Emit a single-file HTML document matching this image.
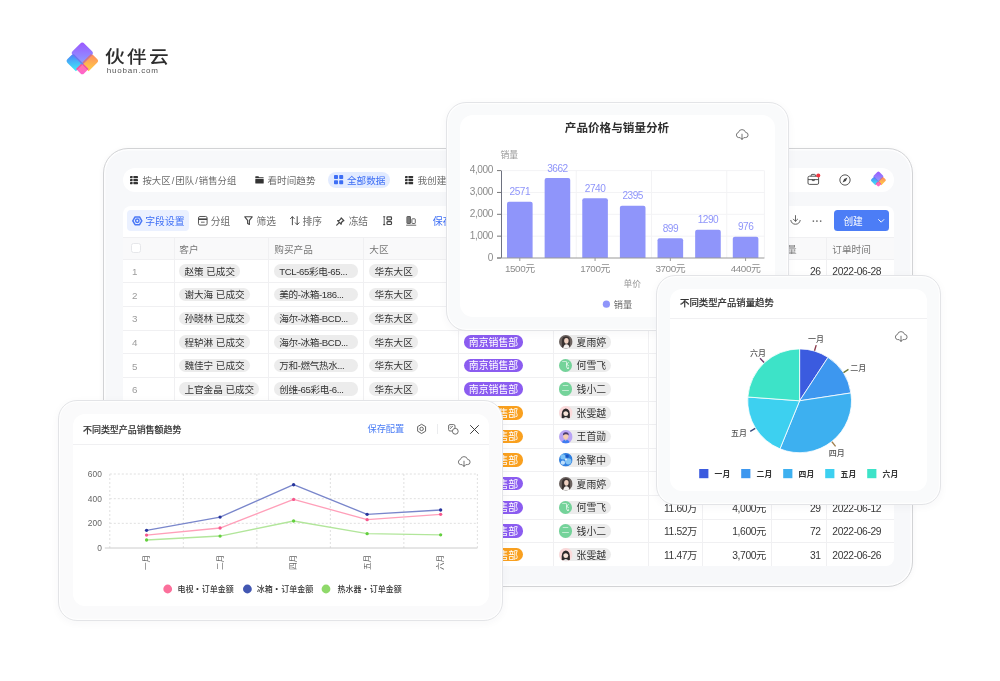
<!DOCTYPE html>
<html lang="zh-CN">
<head>
<meta charset="utf-8">
<title>伙伴云 - 数据分析</title>
<style>
*{box-sizing:border-box;margin:0;padding:0}
html,body{width:1000px;height:681px;background:#fff;overflow:hidden}
body{font-family:"Liberation Sans","Noto Sans CJK SC",sans-serif;position:relative}
#c{position:absolute;left:0;top:0;width:1000px;height:681px;overflow:hidden;will-change:transform}
.t{position:absolute;line-height:20px;white-space:nowrap}
.abs{position:absolute}
.panel{position:absolute;background:#f9fafb;border:1px solid #e3e4e7;box-shadow:0 2px 9px rgba(40,50,70,.04),inset 0 0 0 1.2px rgba(255,255,255,.8)}
.card{position:absolute;background:#fff}
svg{position:absolute;overflow:visible}
svg text{font-family:"Liberation Sans","Noto Sans CJK SC",sans-serif}
.chip{position:absolute;height:13.4px;border-radius:6.7px;background:#ececec}
.cp{z-index:0}
.cp b{position:absolute;z-index:-1;height:13.4px;border-radius:6.7px}
.t i{font-style:normal;padding:0 1.1px}
.hl{position:absolute;height:1px;background:#f0f0f2}
.vl{position:absolute;width:1px;background:#f0f0f2}
</style>
</head>
<body>
<div id="c">

<svg class="abs" style="left:0;top:0" width="1000" height="681" viewBox="0 0 1000 681">
<defs>
<linearGradient id="lgpa" gradientUnits="userSpaceOnUse" x1="-15.6" y1="-15.6" x2="0.7" y2="0.7"><stop offset="0" stop-color="#9c55ff"/><stop offset="1" stop-color="#8ca2ff"/></linearGradient>
<linearGradient id="lgba" gradientUnits="userSpaceOnUse" x1="-13.6" y1="0" x2="-2" y2="9.8"><stop offset="0" stop-color="#4b82f7"/><stop offset="1" stop-color="#3fe2f8"/></linearGradient>
<linearGradient id="lgoa" gradientUnits="userSpaceOnUse" x1="0" y1="-13.8" x2="9.8" y2="-2"><stop offset="0" stop-color="#ff8a60"/><stop offset="1" stop-color="#ffc946"/></linearGradient>
<linearGradient id="lgka" gradientUnits="userSpaceOnUse" x1="0" y1="0" x2="8" y2="8"><stop offset="0" stop-color="#ff79a2"/><stop offset="1" stop-color="#ff5fd2"/></linearGradient>
</defs>
<g transform="translate(82.3,63.7) scale(1) rotate(45)">
<path d="M-11 -0.9 H0.9 V9.9 H-11 Q-13.7 9.9 -13.7 7.2 V1.8 Q-13.7 -0.9 -11 -0.9 Z" fill="url(#lgba)"/>
<path d="M-0.9 -11.1 V0.9 H9.9 V-11.1 Q9.9 -13.8 7.2 -13.8 H1.8 Q-0.9 -13.8 -0.9 -11.1 Z" fill="url(#lgoa)"/>
<path d="M-0.7 -0.7 H8.1 V5.6 Q8.1 8.1 5.6 8.1 H-0.7 Z" fill="url(#lgka)"/>
<path d="M-0.7 0.7 H0.7 V8.1 H-0.7 Z M0.7 -0.7 H8.1 V0.7 H0.7 Z" fill="#e9479a" opacity=".75"/>
<path d="M-12.6 -15.7 H-2.2 Q0.8 -15.7 0.8 -12.7 V0.8 H-12.7 Q-15.7 0.8 -15.7 -2.2 V-12.6 Q-15.7 -15.7 -12.6 -15.7 Z" fill="url(#lgpa)"/>
<path d="M-13 -0.8 H0.8 V0.8 H-13 Z" fill="#4468e6" opacity=".55"/>
<path d="M-0.8 -13 H0.8 V-0.8 H-0.8 Z" fill="#f2664f" opacity=".7"/>
</g></svg>
<span class="t " style="left:105.2px;top:47.00px;font-size:17.6px;color:#2e2e2e;font-weight:500;letter-spacing:2.1px;transform:scaleX(1.12);transform-origin:0 50%;">伙伴云</span>
<span class="t " style="left:106.7px;top:61.00px;font-size:8px;color:#555;font-weight:400;letter-spacing:0.8px;">huoban.com</span>
<div class="panel" style="left:103px;top:148px;width:810px;height:439px;border-radius:25px;border-color:#d2d3d5;background:#f7f8fa;box-shadow:0 1px 6px rgba(40,50,70,.04),inset 0 0 0 1.5px rgba(255,255,255,.75)"></div>
<div class="card" style="left:122.5px;top:167.5px;width:771.5px;height:24px;border-radius:12px"></div>
<svg style="left:129.9px;top:175.5px" width="8.0" height="8.0" fill="#333"><rect x="0" y="0.00" width="2.60" height="2.20" rx="0.4"/><rect x="3.40" y="0.00" width="4.60" height="2.20" rx="0.4"/><rect x="0" y="3.00" width="2.60" height="2.20" rx="0.4"/><rect x="3.40" y="3.00" width="4.60" height="2.20" rx="0.4"/><rect x="0" y="6.00" width="2.60" height="2.20" rx="0.4"/><rect x="3.40" y="6.00" width="4.60" height="2.20" rx="0.4"/></svg>
<span class="t " style="left:142.5px;top:171.00px;font-size:9.35px;color:#6b6b6b;font-weight:400;">按大区<i>/</i>团队<i>/</i>销售分组</span>
<svg style="left:255px;top:175.8px" width="9" height="8" viewBox="0 0 9 8" fill="#333"><path d="M0.3 0.8 Q0.3 0.3 0.8 0.3 H3.4 L4.2 1.2 H8.2 Q8.7 1.2 8.7 1.7 V2.3 H0.3 Z"/><rect x="0.3" y="3" width="8.4" height="4.4" rx="0.5"/></svg>
<span class="t " style="left:267.5px;top:171.00px;font-size:9.65px;color:#6b6b6b;font-weight:400;">看时间趋势</span>
<div class="abs" style="left:328px;top:171.8px;width:62.4px;height:16.2px;border-radius:8.1px;background:#e2ebff"></div>
<svg style="left:334px;top:175.3px" width="9.2" height="9.2" viewBox="0 0 9.2 9.2" fill="#3d6ef5"><rect x="0" y="0" width="4" height="4" rx="0.8"/><rect x="5.2" y="0" width="4" height="4" rx="0.8"/><rect x="0" y="5.2" width="4" height="4" rx="0.8"/><rect x="5.2" y="5.2" width="4" height="4" rx="0.8"/></svg>
<span class="t " style="left:347px;top:171.00px;font-size:9.6px;color:#3d6ef5;font-weight:400;">全部数据</span>
<svg style="left:405.2px;top:175.7px" width="8.1" height="8.1" fill="#333"><rect x="0" y="0.00" width="2.63" height="2.23" rx="0.4"/><rect x="3.44" y="0.00" width="4.66" height="2.23" rx="0.4"/><rect x="0" y="3.04" width="2.63" height="2.23" rx="0.4"/><rect x="3.44" y="3.04" width="4.66" height="2.23" rx="0.4"/><rect x="0" y="6.07" width="2.63" height="2.23" rx="0.4"/><rect x="3.44" y="6.07" width="4.66" height="2.23" rx="0.4"/></svg>
<span class="t " style="left:417.5px;top:171.00px;font-size:9.6px;color:#6b6b6b;font-weight:400;">我创建的</span>
<svg style="left:806.6px;top:172.7px" width="14" height="13" viewBox="0 0 14 13" fill="none" stroke="#444" stroke-width="0.9" stroke-linejoin="round">
<rect x="1" y="3.2" width="10.6" height="8.2" rx="1.4"/><path d="M4.2 3.2 V2.2 Q4.2 1.4 5 1.4 H7.6 Q8.4 1.4 8.4 2.2 V3.2"/><path d="M1 6.6 H11.6"/><path d="M5.3 6.2 V7.6 H7.3 V6.2" />
<circle cx="11.3" cy="2.4" r="2" fill="#f5333f" stroke="none"/></svg>
<svg style="left:839px;top:173.6px" width="12" height="12" viewBox="0 0 12 12" fill="none" stroke="#444" stroke-width="0.9">
<circle cx="6" cy="6" r="5.15"/><path d="M8.4 3.6 L6.9 6.9 L3.6 8.4 L5.1 5.1 Z" fill="#444" stroke="none"/></svg>
<svg class="abs" style="left:0;top:0" width="1000" height="681" viewBox="0 0 1000 681">
<defs>
<linearGradient id="lgpb" gradientUnits="userSpaceOnUse" x1="-15.6" y1="-15.6" x2="0.7" y2="0.7"><stop offset="0" stop-color="#9c55ff"/><stop offset="1" stop-color="#8ca2ff"/></linearGradient>
<linearGradient id="lgbb" gradientUnits="userSpaceOnUse" x1="-13.6" y1="0" x2="-2" y2="9.8"><stop offset="0" stop-color="#4b82f7"/><stop offset="1" stop-color="#3fe2f8"/></linearGradient>
<linearGradient id="lgob" gradientUnits="userSpaceOnUse" x1="0" y1="-13.8" x2="9.8" y2="-2"><stop offset="0" stop-color="#ff8a60"/><stop offset="1" stop-color="#ffc946"/></linearGradient>
<linearGradient id="lgkb" gradientUnits="userSpaceOnUse" x1="0" y1="0" x2="8" y2="8"><stop offset="0" stop-color="#ff79a2"/><stop offset="1" stop-color="#ff5fd2"/></linearGradient>
</defs>
<g transform="translate(878.4,181.5) scale(0.475) rotate(45)">
<path d="M-11 -0.9 H0.9 V9.9 H-11 Q-13.7 9.9 -13.7 7.2 V1.8 Q-13.7 -0.9 -11 -0.9 Z" fill="url(#lgbb)"/>
<path d="M-0.9 -11.1 V0.9 H9.9 V-11.1 Q9.9 -13.8 7.2 -13.8 H1.8 Q-0.9 -13.8 -0.9 -11.1 Z" fill="url(#lgob)"/>
<path d="M-0.7 -0.7 H8.1 V5.6 Q8.1 8.1 5.6 8.1 H-0.7 Z" fill="url(#lgkb)"/>
<path d="M-0.7 0.7 H0.7 V8.1 H-0.7 Z M0.7 -0.7 H8.1 V0.7 H0.7 Z" fill="#e9479a" opacity=".75"/>
<path d="M-12.6 -15.7 H-2.2 Q0.8 -15.7 0.8 -12.7 V0.8 H-12.7 Q-15.7 0.8 -15.7 -2.2 V-12.6 Q-15.7 -15.7 -12.6 -15.7 Z" fill="url(#lgpb)"/>
<path d="M-13 -0.8 H0.8 V0.8 H-13 Z" fill="#4468e6" opacity=".55"/>
<path d="M-0.8 -13 H0.8 V-0.8 H-0.8 Z" fill="#f2664f" opacity=".7"/>
</g></svg>
<div class="card" style="left:122.5px;top:206.3px;width:771px;height:360px;border-radius:8px"></div>
<div class="abs" style="left:126.8px;top:210px;width:62.2px;height:21.4px;border-radius:4px;background:#ebf1ff"></div>
<svg style="left:0;top:0" width="1000" height="681" fill="none" stroke="#4a78f6" stroke-width="1.5" stroke-linejoin="round"><path d="M141.80 220.80 L139.55 224.70 L135.05 224.70 L132.80 220.80 L135.05 216.90 L139.55 216.90 Z"/><circle cx="137.3" cy="220.79999999999998" r="1.71"/></svg>
<span class="t " style="left:145.3px;top:212.00px;font-size:9.8px;color:#3d6ef5;font-weight:400;">字段设置</span>
<svg style="left:198px;top:215.89999999999998px" width="9.6" height="9.6" viewBox="0 0 9.6 9.6" fill="none" stroke="#444" stroke-width="0.9">
<rect x="0.5" y="0.5" width="8.6" height="8.6" rx="1.4"/><path d="M0.5 3.2 H9.1" stroke-width="1.6"/><path d="M3 6.2 H6.6" stroke-width="0.8"/></svg>
<span class="t " style="left:210.8px;top:212.00px;font-size:9.7px;color:#6b6b6b;font-weight:400;">分组</span>
<svg style="left:244.2px;top:216.29999999999998px" width="9" height="9.4" viewBox="0 0 9 9.4" fill="none" stroke="#4a4a4a" stroke-width="1.15" stroke-linejoin="round">
<path d="M0.8 0.8 H8.2 L5.4 4.3 V8.4 L3.6 7.4 V4.3 Z"/></svg>
<span class="t " style="left:256.6px;top:212.00px;font-size:9.7px;color:#6b6b6b;font-weight:400;">筛选</span>
<svg style="left:290.3px;top:216.1px" width="9.6" height="9.4" viewBox="0 0 9.6 9.4" fill="none" stroke="#444" stroke-width="0.95" stroke-linecap="round" stroke-linejoin="round">
<path d="M2.4 8.8 V0.8 M0.5 2.6 L2.4 0.7 L4.3 2.6"/><path d="M7.2 0.6 V8.6 M5.3 6.8 L7.2 8.7 L9.1 6.8"/></svg>
<span class="t " style="left:302.6px;top:212.00px;font-size:9.7px;color:#6b6b6b;font-weight:400;">排序</span>
<svg style="left:336.2px;top:216.89999999999998px" width="8.8" height="8.8" viewBox="0 0 8.8 8.8" fill="none" stroke="#444" stroke-width="1.25" stroke-linejoin="round" stroke-linecap="round">
<path d="M5.2 0.9 L7.9 3.6 L6.9 4 L5.4 5.5 L5.2 7.2 L1.6 3.6 L3.3 3.4 L4.8 1.9 Z"/><path d="M3.2 5.6 L0.7 8.1"/></svg>
<span class="t " style="left:348.7px;top:212.00px;font-size:9.7px;color:#6b6b6b;font-weight:400;">冻结</span>
<svg style="left:382.6px;top:216.2px" width="9.2" height="9.4" viewBox="0 0 9.2 9.4" fill="none" stroke="#444">
<path d="M1.2 0.9 V8.5" stroke-width="0.9"/><path d="M0.2 0.8 H2.2 M0.2 8.6 H2.2" stroke-width="1.1"/><rect x="4" y="0.9" width="4.5" height="2.9" rx="0.8" stroke-width="1.2"/><rect x="4" y="5.6" width="4.5" height="2.9" rx="0.8" stroke-width="1.2"/></svg>
<svg style="left:406px;top:216.2px" width="10.4" height="9.8" viewBox="0 0 10.4 9.8" fill="none" stroke="#555" stroke-width="0.9">
<rect x="0.9" y="0.5" width="3.6" height="7" rx="0.4" fill="#999"/><path d="M2.1 0.8 V7.3 M3.3 0.8 V7.3" stroke-width="0.6"/><rect x="5.9" y="2.8" width="3.4" height="4.7" rx="0.6"/><path d="M0.2 9.2 H10.2"/></svg>
<span class="t " style="left:432.8px;top:212.00px;font-size:10px;color:#3d6ef5;font-weight:400;">保存</span>
<svg style="left:789.5px;top:215.39999999999998px" width="11" height="10.6" viewBox="0 0 11 10.6" fill="none" stroke="#555" stroke-width="0.9" stroke-linecap="round" stroke-linejoin="round">
<path d="M5.5 0.6 V6.2 M3.4 4.2 L5.5 6.3 L7.6 4.2"/><path d="M0.8 5.4 A4.8 4.8 0 0 0 10.2 5.4"/></svg>
<span class="t " style="left:667.4px;width:300px;text-align:center;top:212.00px;font-size:10px;color:#777;font-weight:700;letter-spacing:0.3px;">···</span>
<div class="abs" style="left:834px;top:210px;width:55px;height:21.4px;border-radius:3.5px;background:#4c7df6"></div>
<span class="t " style="left:843.4px;top:212.00px;font-size:9.7px;color:#fff;font-weight:400;">创建</span>
<svg style="left:877.5px;top:218.7px" width="6.4" height="4" viewBox="0 0 6.4 4" fill="none" stroke="#fff" stroke-width="0.95" stroke-linecap="round" stroke-linejoin="round"><path d="M0.6 0.6 L3.2 3.2 L5.8 0.6"/></svg>
<div class="abs" style="left:122.5px;top:237.0px;width:771px;height:22.5px;background:#f9f9fa"></div>
<div class="hl" style="left:122.5px;top:236.5px;width:771px"></div>
<div class="hl" style="left:122.5px;top:258.60px;width:771px"></div>
<div class="hl" style="left:122.5px;top:282.25px;width:771px"></div>
<div class="hl" style="left:122.5px;top:305.90px;width:771px"></div>
<div class="hl" style="left:122.5px;top:329.55px;width:771px"></div>
<div class="hl" style="left:122.5px;top:353.20px;width:771px"></div>
<div class="hl" style="left:122.5px;top:376.85px;width:771px"></div>
<div class="hl" style="left:122.5px;top:400.50px;width:771px"></div>
<div class="hl" style="left:122.5px;top:424.15px;width:771px"></div>
<div class="hl" style="left:122.5px;top:447.80px;width:771px"></div>
<div class="hl" style="left:122.5px;top:471.45px;width:771px"></div>
<div class="hl" style="left:122.5px;top:495.10px;width:771px"></div>
<div class="hl" style="left:122.5px;top:518.75px;width:771px"></div>
<div class="hl" style="left:122.5px;top:542.40px;width:771px"></div>
<div class="vl" style="left:174.0px;top:237.0px;height:329.29999999999995px"></div>
<div class="vl" style="left:268.0px;top:237.0px;height:329.29999999999995px"></div>
<div class="vl" style="left:363.0px;top:237.0px;height:329.29999999999995px"></div>
<div class="vl" style="left:458.2px;top:237.0px;height:329.29999999999995px"></div>
<div class="vl" style="left:552.8px;top:237.0px;height:329.29999999999995px"></div>
<div class="vl" style="left:648.1px;top:237.0px;height:329.29999999999995px"></div>
<div class="vl" style="left:702.0px;top:237.0px;height:329.29999999999995px"></div>
<div class="vl" style="left:771.0px;top:237.0px;height:329.29999999999995px"></div>
<div class="vl" style="left:825.5px;top:237.0px;height:329.29999999999995px"></div>
<div class="abs" style="left:130.5px;top:242.8px;width:10.4px;height:10.4px;border-radius:2.5px;background:#fff;border:1px solid #e6e7ea"></div>
<span class="t " style="left:179.3px;top:240.00px;font-size:9.65px;color:#777;font-weight:400;">客户</span>
<span class="t " style="left:274.3px;top:240.00px;font-size:9.65px;color:#777;font-weight:400;">购买产品</span>
<span class="t " style="left:369.3px;top:240.00px;font-size:9.65px;color:#777;font-weight:400;">大区</span>
<span class="t " style="left:464.5px;top:240.00px;font-size:9.65px;color:#777;font-weight:400;">销售团队</span>
<span class="t " style="left:559px;top:240.00px;font-size:9.65px;color:#777;font-weight:400;">销售人员</span>
<span class="t " style="left:654.5px;top:240.00px;font-size:9.65px;color:#777;font-weight:400;">订单金额</span>
<span class="t " style="left:708.5px;top:240.00px;font-size:9.65px;color:#777;font-weight:400;">单价</span>
<span class="t " style="left:777.3px;top:240.00px;font-size:9.65px;color:#777;font-weight:400;">销量</span>
<span class="t " style="left:832.3px;top:240.00px;font-size:9.65px;color:#777;font-weight:400;">订单时间</span>
<span class="t " style="left:-15.599999999999994px;width:300px;text-align:center;top:262.00px;font-size:9.8px;color:#9c9c9c;font-weight:400;letter-spacing:-0.4px;">1</span>
<span class="t cp" style="left:184.4px;top:262px;font-size:9.6px;color:#333;"><b style="left:-5px;right:-5px;top:2.23px;background:#ececec"></b>赵策 已成交</span>
<span class="t cp" style="left:279.2px;top:262px;font-size:9.6px;color:#333;letter-spacing:-0.36px;"><b style="left:-5px;width:83.4px;top:2.23px;background:#ececec"></b>TCL-65彩电-65...</span>
<span class="t cp" style="left:374.4px;top:262px;font-size:9.6px;color:#333;"><b style="left:-5px;right:-5px;top:2.23px;background:#ececec"></b>华东大区</span>
<span class="t cp" style="left:468.8px;top:262px;font-size:9.9px;color:#fff;"><b style="left:-5px;right:-5px;top:2.23px;background:#8b5cf0"></b>南京销售部</span>
<div class="chip" style="left:558.8px;top:264.23px;width:52.4px"></div>
<svg style="left:558.80px;top:264.18px" width="13.6" height="13.6" viewBox="0 0 14 14"><defs><clipPath id="av565_270"><circle cx="7" cy="7" r="7"/></clipPath></defs><g clip-path="url(#av565_270)"><rect width="14" height="14" fill="#6b625f"/><path d="M3 14 V6 Q3 1.5 7.4 1.5 Q11.5 1.5 11.2 7 V14 Z" fill="#3a3230"/><ellipse cx="7.6" cy="6" rx="2.3" ry="2.9" fill="#f0d2c2"/><path d="M4.2 14 Q5 9.6 7.6 9.6 Q10.4 9.6 11 14 Z" fill="#f4f1ef"/></g></svg>
<span class="t " style="left:576.6px;top:262.00px;font-size:9.8px;color:#333;font-weight:400;">夏雨婷</span>
<span class="t " style="right:303px;top:262.00px;font-size:10.3px;color:#383838;font-weight:400;letter-spacing:-0.38px;">12.95万</span>
<span class="t " style="right:234px;top:262.00px;font-size:10.3px;color:#383838;font-weight:400;letter-spacing:-0.38px;">1,500元</span>
<span class="t " style="right:179.39999999999998px;top:262.00px;font-size:10.3px;color:#383838;font-weight:400;letter-spacing:-0.38px;">26</span>
<span class="t " style="left:832.3px;top:262.00px;font-size:10.3px;color:#383838;font-weight:400;letter-spacing:-0.38px;">2022-06-28</span>
<span class="t " style="left:-15.599999999999994px;width:300px;text-align:center;top:286.00px;font-size:9.8px;color:#9c9c9c;font-weight:400;letter-spacing:-0.4px;">2</span>
<span class="t cp" style="left:184.4px;top:285px;font-size:9.6px;color:#333;"><b style="left:-5px;right:-5px;top:2.88px;background:#ececec"></b>谢大海 已成交</span>
<span class="t cp" style="left:279.2px;top:285px;font-size:9.6px;color:#333;letter-spacing:-0.36px;"><b style="left:-5px;width:83.4px;top:2.88px;background:#ececec"></b>美的-冰箱-186...</span>
<span class="t cp" style="left:374.4px;top:285px;font-size:9.6px;color:#333;"><b style="left:-5px;right:-5px;top:2.88px;background:#ececec"></b>华东大区</span>
<span class="t cp" style="left:468.8px;top:285px;font-size:9.9px;color:#fff;"><b style="left:-5px;right:-5px;top:2.88px;background:#8b5cf0"></b>南京销售部</span>
<div class="chip" style="left:558.8px;top:287.88px;width:52.4px"></div>
<div class="abs" style="left:558.80px;top:287.82px;width:13.6px;height:13.6px;border-radius:50%;background:#74d39a;color:#fff;font-size:7.5px;line-height:13.6px;text-align:center">飞</div>
<span class="t " style="left:576.6px;top:285.00px;font-size:9.8px;color:#333;font-weight:400;">何雪飞</span>
<span class="t " style="right:303px;top:286.00px;font-size:10.3px;color:#383838;font-weight:400;letter-spacing:-0.38px;">12.80万</span>
<span class="t " style="right:234px;top:286.00px;font-size:10.3px;color:#383838;font-weight:400;letter-spacing:-0.38px;">1,600元</span>
<span class="t " style="right:179.39999999999998px;top:286.00px;font-size:10.3px;color:#383838;font-weight:400;letter-spacing:-0.38px;">81</span>
<span class="t " style="left:832.3px;top:286.00px;font-size:10.3px;color:#383838;font-weight:400;letter-spacing:-0.38px;">2022-06-03</span>
<span class="t " style="left:-15.599999999999994px;width:300px;text-align:center;top:309.00px;font-size:9.8px;color:#9c9c9c;font-weight:400;letter-spacing:-0.4px;">3</span>
<span class="t cp" style="left:184.4px;top:309px;font-size:9.6px;color:#333;"><b style="left:-5px;right:-5px;top:2.53px;background:#ececec"></b>孙晓林 已成交</span>
<span class="t cp" style="left:279.2px;top:309px;font-size:9.6px;color:#333;letter-spacing:-0.36px;"><b style="left:-5px;width:83.4px;top:2.53px;background:#ececec"></b>海尔-冰箱-BCD...</span>
<span class="t cp" style="left:374.4px;top:309px;font-size:9.6px;color:#333;"><b style="left:-5px;right:-5px;top:2.53px;background:#ececec"></b>华东大区</span>
<span class="t cp" style="left:468.8px;top:309px;font-size:9.9px;color:#fff;"><b style="left:-5px;right:-5px;top:2.53px;background:#8b5cf0"></b>南京销售部</span>
<div class="chip" style="left:558.8px;top:311.53px;width:52.4px"></div>
<div class="abs" style="left:558.80px;top:311.48px;width:13.6px;height:13.6px;border-radius:50%;background:#74d39a;color:#fff;font-size:7.5px;line-height:13.6px;text-align:center">二</div>
<span class="t " style="left:576.6px;top:309.00px;font-size:9.8px;color:#333;font-weight:400;">钱小二</span>
<span class="t " style="right:303px;top:310.00px;font-size:10.3px;color:#383838;font-weight:400;letter-spacing:-0.38px;">12.61万</span>
<span class="t " style="right:234px;top:310.00px;font-size:10.3px;color:#383838;font-weight:400;letter-spacing:-0.38px;">1,700元</span>
<span class="t " style="right:179.39999999999998px;top:310.00px;font-size:10.3px;color:#383838;font-weight:400;letter-spacing:-0.38px;">74</span>
<span class="t " style="left:832.3px;top:310.00px;font-size:10.3px;color:#383838;font-weight:400;letter-spacing:-0.38px;">2022-06-17</span>
<span class="t " style="left:-15.599999999999994px;width:300px;text-align:center;top:333.00px;font-size:9.8px;color:#9c9c9c;font-weight:400;letter-spacing:-0.4px;">4</span>
<span class="t cp" style="left:184.4px;top:333px;font-size:9.6px;color:#333;"><b style="left:-5px;right:-5px;top:2.18px;background:#ececec"></b>程轳淋 已成交</span>
<span class="t cp" style="left:279.2px;top:333px;font-size:9.6px;color:#333;letter-spacing:-0.36px;"><b style="left:-5px;width:83.4px;top:2.18px;background:#ececec"></b>海尔-冰箱-BCD...</span>
<span class="t cp" style="left:374.4px;top:333px;font-size:9.6px;color:#333;"><b style="left:-5px;right:-5px;top:2.18px;background:#ececec"></b>华东大区</span>
<span class="t cp" style="left:468.8px;top:333px;font-size:9.9px;color:#fff;"><b style="left:-5px;right:-5px;top:2.18px;background:#8b5cf0"></b>南京销售部</span>
<div class="chip" style="left:558.8px;top:335.18px;width:52.4px"></div>
<svg style="left:558.80px;top:335.12px" width="13.6" height="13.6" viewBox="0 0 14 14"><defs><clipPath id="av565_341"><circle cx="7" cy="7" r="7"/></clipPath></defs><g clip-path="url(#av565_341)"><rect width="14" height="14" fill="#6b625f"/><path d="M3 14 V6 Q3 1.5 7.4 1.5 Q11.5 1.5 11.2 7 V14 Z" fill="#3a3230"/><ellipse cx="7.6" cy="6" rx="2.3" ry="2.9" fill="#f0d2c2"/><path d="M4.2 14 Q5 9.6 7.6 9.6 Q10.4 9.6 11 14 Z" fill="#f4f1ef"/></g></svg>
<span class="t " style="left:576.6px;top:333.00px;font-size:9.8px;color:#333;font-weight:400;">夏雨婷</span>
<span class="t " style="right:303px;top:333.00px;font-size:10.3px;color:#383838;font-weight:400;letter-spacing:-0.38px;">12.44万</span>
<span class="t " style="right:234px;top:333.00px;font-size:10.3px;color:#383838;font-weight:400;letter-spacing:-0.38px;">2,800元</span>
<span class="t " style="right:179.39999999999998px;top:333.00px;font-size:10.3px;color:#383838;font-weight:400;letter-spacing:-0.38px;">44</span>
<span class="t " style="left:832.3px;top:333.00px;font-size:10.3px;color:#383838;font-weight:400;letter-spacing:-0.38px;">2022-06-21</span>
<span class="t " style="left:-15.599999999999994px;width:300px;text-align:center;top:357.00px;font-size:9.8px;color:#9c9c9c;font-weight:400;letter-spacing:-0.4px;">5</span>
<span class="t cp" style="left:184.4px;top:356px;font-size:9.6px;color:#333;"><b style="left:-5px;right:-5px;top:2.83px;background:#ececec"></b>魏佳宁 已成交</span>
<span class="t cp" style="left:279.2px;top:356px;font-size:9.6px;color:#333;letter-spacing:-0.36px;"><b style="left:-5px;width:83.4px;top:2.83px;background:#ececec"></b>万和-燃气热水...</span>
<span class="t cp" style="left:374.4px;top:356px;font-size:9.6px;color:#333;"><b style="left:-5px;right:-5px;top:2.83px;background:#ececec"></b>华东大区</span>
<span class="t cp" style="left:468.8px;top:356px;font-size:9.9px;color:#fff;"><b style="left:-5px;right:-5px;top:2.83px;background:#8b5cf0"></b>南京销售部</span>
<div class="chip" style="left:558.8px;top:358.83px;width:52.4px"></div>
<div class="abs" style="left:558.80px;top:358.78px;width:13.6px;height:13.6px;border-radius:50%;background:#74d39a;color:#fff;font-size:7.5px;line-height:13.6px;text-align:center">飞</div>
<span class="t " style="left:576.6px;top:356.00px;font-size:9.8px;color:#333;font-weight:400;">何雪飞</span>
<span class="t " style="right:303px;top:357.00px;font-size:10.3px;color:#383838;font-weight:400;letter-spacing:-0.38px;">12.30万</span>
<span class="t " style="right:234px;top:357.00px;font-size:10.3px;color:#383838;font-weight:400;letter-spacing:-0.38px;">3,700元</span>
<span class="t " style="right:179.39999999999998px;top:357.00px;font-size:10.3px;color:#383838;font-weight:400;letter-spacing:-0.38px;">33</span>
<span class="t " style="left:832.3px;top:357.00px;font-size:10.3px;color:#383838;font-weight:400;letter-spacing:-0.38px;">2022-06-08</span>
<span class="t " style="left:-15.599999999999994px;width:300px;text-align:center;top:380.00px;font-size:9.8px;color:#9c9c9c;font-weight:400;letter-spacing:-0.4px;">6</span>
<span class="t cp" style="left:184.4px;top:380px;font-size:9.6px;color:#333;"><b style="left:-5px;right:-5px;top:2.48px;background:#ececec"></b>上官金晶 已成交</span>
<span class="t cp" style="left:279.2px;top:380px;font-size:9.6px;color:#333;letter-spacing:-0.36px;"><b style="left:-5px;width:83.4px;top:2.48px;background:#ececec"></b>创维-65彩电-6...</span>
<span class="t cp" style="left:374.4px;top:380px;font-size:9.6px;color:#333;"><b style="left:-5px;right:-5px;top:2.48px;background:#ececec"></b>华东大区</span>
<span class="t cp" style="left:468.8px;top:380px;font-size:9.9px;color:#fff;"><b style="left:-5px;right:-5px;top:2.48px;background:#8b5cf0"></b>南京销售部</span>
<div class="chip" style="left:558.8px;top:382.48px;width:52.4px"></div>
<div class="abs" style="left:558.80px;top:382.43px;width:13.6px;height:13.6px;border-radius:50%;background:#74d39a;color:#fff;font-size:7.5px;line-height:13.6px;text-align:center">二</div>
<span class="t " style="left:576.6px;top:380.00px;font-size:9.8px;color:#333;font-weight:400;">钱小二</span>
<span class="t " style="right:303px;top:381.00px;font-size:10.3px;color:#383838;font-weight:400;letter-spacing:-0.38px;">12.18万</span>
<span class="t " style="right:234px;top:381.00px;font-size:10.3px;color:#383838;font-weight:400;letter-spacing:-0.38px;">4,000元</span>
<span class="t " style="right:179.39999999999998px;top:381.00px;font-size:10.3px;color:#383838;font-weight:400;letter-spacing:-0.38px;">30</span>
<span class="t " style="left:832.3px;top:381.00px;font-size:10.3px;color:#383838;font-weight:400;letter-spacing:-0.38px;">2022-06-14</span>
<span class="t " style="left:-15.599999999999994px;width:300px;text-align:center;top:404.00px;font-size:9.8px;color:#9c9c9c;font-weight:400;letter-spacing:-0.4px;">7</span>
<span class="t cp" style="left:184.4px;top:404px;font-size:9.6px;color:#333;"><b style="left:-5px;right:-5px;top:2.12px;background:#ececec"></b>周文博 已成交</span>
<span class="t cp" style="left:279.2px;top:404px;font-size:9.6px;color:#333;letter-spacing:-0.36px;"><b style="left:-5px;width:83.4px;top:2.12px;background:#ececec"></b>美的-热水器-F...</span>
<span class="t cp" style="left:374.4px;top:404px;font-size:9.6px;color:#333;"><b style="left:-5px;right:-5px;top:2.12px;background:#ececec"></b>华东大区</span>
<span class="t cp" style="left:468.8px;top:404px;font-size:9.9px;color:#fff;"><b style="left:-5px;right:-5px;top:2.12px;background:#f9a01f"></b>苏州销售部</span>
<div class="chip" style="left:558.8px;top:406.12px;width:52.4px"></div>
<svg style="left:558.80px;top:406.07px" width="13.6" height="13.6" viewBox="0 0 14 14"><defs><clipPath id="av565_412"><circle cx="7" cy="7" r="7"/></clipPath></defs><g clip-path="url(#av565_412)"><rect width="14" height="14" fill="#fbd9da"/><path d="M2.8 12.5 Q2 3 7 2.6 Q12 3 11.2 12.5 Z" fill="#2d2a2b"/><ellipse cx="7" cy="7.6" rx="2.5" ry="2.6" fill="#f7e3d8"/><path d="M4.4 6.6 Q7 4.4 9.6 6.6 L9.6 5 Q7 3.4 4.4 5 Z" fill="#2d2a2b"/><path d="M4 14 Q4.6 11.2 7 11.2 Q9.4 11.2 10 14 Z" fill="#e9e6e6"/></g></svg>
<span class="t " style="left:576.6px;top:404.00px;font-size:9.8px;color:#333;font-weight:400;">张雯越</span>
<span class="t " style="right:303px;top:404.00px;font-size:10.3px;color:#383838;font-weight:400;letter-spacing:-0.38px;">12.05万</span>
<span class="t " style="right:234px;top:404.00px;font-size:10.3px;color:#383838;font-weight:400;letter-spacing:-0.38px;">4,400元</span>
<span class="t " style="right:179.39999999999998px;top:404.00px;font-size:10.3px;color:#383838;font-weight:400;letter-spacing:-0.38px;">27</span>
<span class="t " style="left:832.3px;top:404.00px;font-size:10.3px;color:#383838;font-weight:400;letter-spacing:-0.38px;">2022-06-25</span>
<span class="t " style="left:-15.599999999999994px;width:300px;text-align:center;top:428.00px;font-size:9.8px;color:#9c9c9c;font-weight:400;letter-spacing:-0.4px;">8</span>
<span class="t cp" style="left:184.4px;top:427px;font-size:9.6px;color:#333;"><b style="left:-5px;right:-5px;top:2.77px;background:#ececec"></b>李思远 已成交</span>
<span class="t cp" style="left:279.2px;top:427px;font-size:9.6px;color:#333;letter-spacing:-0.36px;"><b style="left:-5px;width:83.4px;top:2.77px;background:#ececec"></b>海尔-冰箱-BCD...</span>
<span class="t cp" style="left:374.4px;top:427px;font-size:9.6px;color:#333;"><b style="left:-5px;right:-5px;top:2.77px;background:#ececec"></b>华东大区</span>
<span class="t cp" style="left:468.8px;top:427px;font-size:9.9px;color:#fff;"><b style="left:-5px;right:-5px;top:2.77px;background:#f9a01f"></b>苏州销售部</span>
<div class="chip" style="left:558.8px;top:429.77px;width:52.4px"></div>
<svg style="left:558.80px;top:429.72px" width="13.6" height="13.6" viewBox="0 0 14 14"><defs><clipPath id="av565_436"><circle cx="7" cy="7" r="7"/></clipPath></defs><g clip-path="url(#av565_436)"><rect width="14" height="14" fill="#b9a4f5"/><ellipse cx="7" cy="6.4" rx="2.7" ry="3" fill="#f6cdb0"/><path d="M4 5.6 Q4 2.2 7.2 2.4 Q10.2 2.4 10 5.6 Q8.5 4 6.6 4.4 Q5 4.6 4 5.6 Z" fill="#4a3a6a"/><path d="M2.6 14 Q3.2 10 7 10 Q10.8 10 11.4 14 Z" fill="#3f7df2"/><path d="M5.8 9.6 L7 11.4 L8.2 9.6 Z" fill="#f6cdb0"/></g></svg>
<span class="t " style="left:576.6px;top:427.00px;font-size:9.8px;color:#333;font-weight:400;">王首勋</span>
<span class="t " style="right:303px;top:428.00px;font-size:10.3px;color:#383838;font-weight:400;letter-spacing:-0.38px;">11.93万</span>
<span class="t " style="right:234px;top:428.00px;font-size:10.3px;color:#383838;font-weight:400;letter-spacing:-0.38px;">1,500元</span>
<span class="t " style="right:179.39999999999998px;top:428.00px;font-size:10.3px;color:#383838;font-weight:400;letter-spacing:-0.38px;">79</span>
<span class="t " style="left:832.3px;top:428.00px;font-size:10.3px;color:#383838;font-weight:400;letter-spacing:-0.38px;">2022-06-05</span>
<span class="t " style="left:-15.599999999999994px;width:300px;text-align:center;top:451.00px;font-size:9.8px;color:#9c9c9c;font-weight:400;letter-spacing:-0.4px;">9</span>
<span class="t cp" style="left:184.4px;top:451px;font-size:9.6px;color:#333;"><b style="left:-5px;right:-5px;top:2.43px;background:#ececec"></b>陈嘉怡 已成交</span>
<span class="t cp" style="left:279.2px;top:451px;font-size:9.6px;color:#333;letter-spacing:-0.36px;"><b style="left:-5px;width:83.4px;top:2.43px;background:#ececec"></b>TCL-65彩电-65...</span>
<span class="t cp" style="left:374.4px;top:451px;font-size:9.6px;color:#333;"><b style="left:-5px;right:-5px;top:2.43px;background:#ececec"></b>华东大区</span>
<span class="t cp" style="left:468.8px;top:451px;font-size:9.9px;color:#fff;"><b style="left:-5px;right:-5px;top:2.43px;background:#f9a01f"></b>苏州销售部</span>
<div class="chip" style="left:558.8px;top:453.43px;width:52.4px"></div>
<svg style="left:558.80px;top:453.38px" width="13.6" height="13.6" viewBox="0 0 14 14"><defs><clipPath id="av565_460"><circle cx="7" cy="7" r="7"/></clipPath></defs><g clip-path="url(#av565_460)"><rect width="14" height="14" fill="#2f7fe0"/><circle cx="4" cy="4" r="2.6" fill="#7fc4f7"/><circle cx="9.6" cy="8.6" r="3.2" fill="#9ad7fa" opacity=".8"/><circle cx="8.5" cy="3.2" r="1.6" fill="#1d55c0"/><circle cx="4" cy="10" r="2.2" fill="#d6efff" opacity=".85"/><circle cx="7" cy="6.6" r="1.2" fill="#fff" opacity=".8"/></g></svg>
<span class="t " style="left:576.6px;top:451.00px;font-size:9.8px;color:#333;font-weight:400;">徐擎中</span>
<span class="t " style="right:303px;top:452.00px;font-size:10.3px;color:#383838;font-weight:400;letter-spacing:-0.38px;">11.86万</span>
<span class="t " style="right:234px;top:452.00px;font-size:10.3px;color:#383838;font-weight:400;letter-spacing:-0.38px;">1,700元</span>
<span class="t " style="right:179.39999999999998px;top:452.00px;font-size:10.3px;color:#383838;font-weight:400;letter-spacing:-0.38px;">70</span>
<span class="t " style="left:832.3px;top:452.00px;font-size:10.3px;color:#383838;font-weight:400;letter-spacing:-0.38px;">2022-06-19</span>
<span class="t " style="left:-15.599999999999994px;width:300px;text-align:center;top:475.00px;font-size:9.8px;color:#9c9c9c;font-weight:400;letter-spacing:-0.4px;">10</span>
<span class="t cp" style="left:184.4px;top:475px;font-size:9.6px;color:#333;"><b style="left:-5px;right:-5px;top:2.08px;background:#ececec"></b>吴昊天 已成交</span>
<span class="t cp" style="left:279.2px;top:475px;font-size:9.6px;color:#333;letter-spacing:-0.36px;"><b style="left:-5px;width:83.4px;top:2.08px;background:#ececec"></b>万和-燃气热水...</span>
<span class="t cp" style="left:374.4px;top:475px;font-size:9.6px;color:#333;"><b style="left:-5px;right:-5px;top:2.08px;background:#ececec"></b>华东大区</span>
<span class="t cp" style="left:468.8px;top:475px;font-size:9.9px;color:#fff;"><b style="left:-5px;right:-5px;top:2.08px;background:#8b5cf0"></b>南京销售部</span>
<div class="chip" style="left:558.8px;top:477.08px;width:52.4px"></div>
<svg style="left:558.80px;top:477.03px" width="13.6" height="13.6" viewBox="0 0 14 14"><defs><clipPath id="av565_483"><circle cx="7" cy="7" r="7"/></clipPath></defs><g clip-path="url(#av565_483)"><rect width="14" height="14" fill="#6b625f"/><path d="M3 14 V6 Q3 1.5 7.4 1.5 Q11.5 1.5 11.2 7 V14 Z" fill="#3a3230"/><ellipse cx="7.6" cy="6" rx="2.3" ry="2.9" fill="#f0d2c2"/><path d="M4.2 14 Q5 9.6 7.6 9.6 Q10.4 9.6 11 14 Z" fill="#f4f1ef"/></g></svg>
<span class="t " style="left:576.6px;top:475.00px;font-size:9.8px;color:#333;font-weight:400;">夏雨婷</span>
<span class="t " style="right:303px;top:475.00px;font-size:10.3px;color:#383838;font-weight:400;letter-spacing:-0.38px;">11.72万</span>
<span class="t " style="right:234px;top:475.00px;font-size:10.3px;color:#383838;font-weight:400;letter-spacing:-0.38px;">2,800元</span>
<span class="t " style="right:179.39999999999998px;top:475.00px;font-size:10.3px;color:#383838;font-weight:400;letter-spacing:-0.38px;">42</span>
<span class="t " style="left:832.3px;top:475.00px;font-size:10.3px;color:#383838;font-weight:400;letter-spacing:-0.38px;">2022-06-30</span>
<span class="t " style="left:-15.599999999999994px;width:300px;text-align:center;top:499.00px;font-size:9.8px;color:#9c9c9c;font-weight:400;letter-spacing:-0.4px;">11</span>
<span class="t cp" style="left:184.4px;top:498px;font-size:9.6px;color:#333;"><b style="left:-5px;right:-5px;top:2.73px;background:#ececec"></b>郑晓彤 已成交</span>
<span class="t cp" style="left:279.2px;top:498px;font-size:9.6px;color:#333;letter-spacing:-0.36px;"><b style="left:-5px;width:83.4px;top:2.73px;background:#ececec"></b>创维-65彩电-6...</span>
<span class="t cp" style="left:374.4px;top:498px;font-size:9.6px;color:#333;"><b style="left:-5px;right:-5px;top:2.73px;background:#ececec"></b>华东大区</span>
<span class="t cp" style="left:468.8px;top:498px;font-size:9.9px;color:#fff;"><b style="left:-5px;right:-5px;top:2.73px;background:#8b5cf0"></b>南京销售部</span>
<div class="chip" style="left:558.8px;top:500.73px;width:52.4px"></div>
<div class="abs" style="left:558.80px;top:500.68px;width:13.6px;height:13.6px;border-radius:50%;background:#74d39a;color:#fff;font-size:7.5px;line-height:13.6px;text-align:center">飞</div>
<span class="t " style="left:576.6px;top:498.00px;font-size:9.8px;color:#333;font-weight:400;">何雪飞</span>
<span class="t " style="right:303px;top:499.00px;font-size:10.3px;color:#383838;font-weight:400;letter-spacing:-0.38px;">11.60万</span>
<span class="t " style="right:234px;top:499.00px;font-size:10.3px;color:#383838;font-weight:400;letter-spacing:-0.38px;">4,000元</span>
<span class="t " style="right:179.39999999999998px;top:499.00px;font-size:10.3px;color:#383838;font-weight:400;letter-spacing:-0.38px;">29</span>
<span class="t " style="left:832.3px;top:499.00px;font-size:10.3px;color:#383838;font-weight:400;letter-spacing:-0.38px;">2022-06-12</span>
<span class="t " style="left:-15.599999999999994px;width:300px;text-align:center;top:522.00px;font-size:9.8px;color:#9c9c9c;font-weight:400;letter-spacing:-0.4px;">12</span>
<span class="t cp" style="left:184.4px;top:522px;font-size:9.6px;color:#333;"><b style="left:-5px;right:-5px;top:2.38px;background:#ececec"></b>冯立新 已成交</span>
<span class="t cp" style="left:279.2px;top:522px;font-size:9.6px;color:#333;letter-spacing:-0.36px;"><b style="left:-5px;width:83.4px;top:2.38px;background:#ececec"></b>美的-冰箱-186...</span>
<span class="t cp" style="left:374.4px;top:522px;font-size:9.6px;color:#333;"><b style="left:-5px;right:-5px;top:2.38px;background:#ececec"></b>华东大区</span>
<span class="t cp" style="left:468.8px;top:522px;font-size:9.9px;color:#fff;"><b style="left:-5px;right:-5px;top:2.38px;background:#8b5cf0"></b>南京销售部</span>
<div class="chip" style="left:558.8px;top:524.38px;width:52.4px"></div>
<div class="abs" style="left:558.80px;top:524.33px;width:13.6px;height:13.6px;border-radius:50%;background:#74d39a;color:#fff;font-size:7.5px;line-height:13.6px;text-align:center">二</div>
<span class="t " style="left:576.6px;top:522.00px;font-size:9.8px;color:#333;font-weight:400;">钱小二</span>
<span class="t " style="right:303px;top:522.00px;font-size:10.3px;color:#383838;font-weight:400;letter-spacing:-0.38px;">11.52万</span>
<span class="t " style="right:234px;top:522.00px;font-size:10.3px;color:#383838;font-weight:400;letter-spacing:-0.38px;">1,600元</span>
<span class="t " style="right:179.39999999999998px;top:522.00px;font-size:10.3px;color:#383838;font-weight:400;letter-spacing:-0.38px;">72</span>
<span class="t " style="left:832.3px;top:522.00px;font-size:10.3px;color:#383838;font-weight:400;letter-spacing:-0.38px;">2022-06-29</span>
<span class="t " style="left:-15.599999999999994px;width:300px;text-align:center;top:546.00px;font-size:9.8px;color:#9c9c9c;font-weight:400;letter-spacing:-0.4px;">13</span>
<span class="t cp" style="left:184.4px;top:545px;font-size:9.6px;color:#333;"><b style="left:-5px;right:-5px;top:3.02px;background:#ececec"></b>杨可欣 已成交</span>
<span class="t cp" style="left:279.2px;top:545px;font-size:9.6px;color:#333;letter-spacing:-0.36px;"><b style="left:-5px;width:83.4px;top:3.02px;background:#ececec"></b>海尔-冰箱-BCD...</span>
<span class="t cp" style="left:374.4px;top:545px;font-size:9.6px;color:#333;"><b style="left:-5px;right:-5px;top:3.02px;background:#ececec"></b>华东大区</span>
<span class="t cp" style="left:468.8px;top:546px;font-size:9.9px;color:#fff;"><b style="left:-5px;right:-5px;top:2.02px;background:#f9a01f"></b>苏州销售部</span>
<div class="chip" style="left:558.8px;top:548.02px;width:52.4px"></div>
<svg style="left:558.80px;top:547.98px" width="13.6" height="13.6" viewBox="0 0 14 14"><defs><clipPath id="av565_554"><circle cx="7" cy="7" r="7"/></clipPath></defs><g clip-path="url(#av565_554)"><rect width="14" height="14" fill="#fbd9da"/><path d="M2.8 12.5 Q2 3 7 2.6 Q12 3 11.2 12.5 Z" fill="#2d2a2b"/><ellipse cx="7" cy="7.6" rx="2.5" ry="2.6" fill="#f7e3d8"/><path d="M4.4 6.6 Q7 4.4 9.6 6.6 L9.6 5 Q7 3.4 4.4 5 Z" fill="#2d2a2b"/><path d="M4 14 Q4.6 11.2 7 11.2 Q9.4 11.2 10 14 Z" fill="#e9e6e6"/></g></svg>
<span class="t " style="left:576.6px;top:546.00px;font-size:9.8px;color:#333;font-weight:400;">张雯越</span>
<span class="t " style="right:303px;top:546.00px;font-size:10.3px;color:#383838;font-weight:400;letter-spacing:-0.38px;">11.47万</span>
<span class="t " style="right:234px;top:546.00px;font-size:10.3px;color:#383838;font-weight:400;letter-spacing:-0.38px;">3,700元</span>
<span class="t " style="right:179.39999999999998px;top:546.00px;font-size:10.3px;color:#383838;font-weight:400;letter-spacing:-0.38px;">31</span>
<span class="t " style="left:832.3px;top:546.00px;font-size:10.3px;color:#383838;font-weight:400;letter-spacing:-0.38px;">2022-06-26</span>
<div class="panel" style="left:446px;top:102px;width:343px;height:229px;border-radius:20px"></div>
<div class="card" style="left:460px;top:115px;width:314.5px;height:202px;border-radius:13px"></div>
<span class="t " style="left:467px;width:300px;text-align:center;top:118.00px;font-size:11.6px;color:#303030;font-weight:700;">产品价格与销量分析</span>
<svg style="left:735.4px;top:129.2px" width="14" height="12" viewBox="0 0 14 12" fill="none" stroke="#666" stroke-width="0.9" stroke-linecap="round" stroke-linejoin="round"><path d="M5 8.6 H3.6 A2.6 2.6 0 0 1 3.4 3.5 A3.7 3.7 0 0 1 10.6 3.4 A2.6 2.6 0 0 1 10.4 8.6 H9"/><path d="M7 5.2 V10"/><path d="M5.9 9.4 L7 10.5 L8.1 9.4" fill="#666"/></svg>
<svg style="left:0;top:0" width="1000" height="681" viewBox="0 0 1000 681"><path d="M501.0 236.15 H764.4" stroke="#f3f3f5" stroke-width="1"/><path d="M501.0 214.30 H764.4" stroke="#f3f3f5" stroke-width="1"/><path d="M501.0 192.45 H764.4" stroke="#f3f3f5" stroke-width="1"/><path d="M501.0 170.60 H764.4" stroke="#f3f3f5" stroke-width="1"/><path d="M576.26 170.60 V258.0" stroke="#f3f3f5" stroke-width="1"/><path d="M651.51 170.60 V258.0" stroke="#f3f3f5" stroke-width="1"/><path d="M726.77 170.60 V258.0" stroke="#f3f3f5" stroke-width="1"/><path d="M764.40 170.60 V258.0" stroke="#f3f3f5" stroke-width="1"/><path d="M507.01 258.0 V203.82 Q507.01 201.82 509.01 201.82 H530.61 Q532.61 201.82 532.61 203.82 V258.0 Z" fill="#8f95fa"/><text x="519.81" y="195.42" font-size="10.1" letter-spacing="-0.5" fill="#8f95fa" text-anchor="middle">2571</text><path d="M544.64 258.0 V179.99 Q544.64 177.99 546.64 177.99 H568.24 Q570.24 177.99 570.24 179.99 V258.0 Z" fill="#8f95fa"/><text x="557.44" y="171.59" font-size="10.1" letter-spacing="-0.5" fill="#8f95fa" text-anchor="middle">3662</text><path d="M582.27 258.0 V200.13 Q582.27 198.13 584.27 198.13 H605.87 Q607.87 198.13 607.87 200.13 V258.0 Z" fill="#8f95fa"/><text x="595.07" y="191.73" font-size="10.1" letter-spacing="-0.5" fill="#8f95fa" text-anchor="middle">2740</text><path d="M619.90 258.0 V207.67 Q619.90 205.67 621.90 205.67 H643.50 Q645.50 205.67 645.50 207.67 V258.0 Z" fill="#8f95fa"/><text x="632.70" y="199.27" font-size="10.1" letter-spacing="-0.5" fill="#8f95fa" text-anchor="middle">2395</text><path d="M657.53 258.0 V240.36 Q657.53 238.36 659.53 238.36 H681.13 Q683.13 238.36 683.13 240.36 V258.0 Z" fill="#8f95fa"/><text x="670.33" y="231.96" font-size="10.1" letter-spacing="-0.5" fill="#8f95fa" text-anchor="middle">899</text><path d="M695.16 258.0 V231.81 Q695.16 229.81 697.16 229.81 H718.76 Q720.76 229.81 720.76 231.81 V258.0 Z" fill="#8f95fa"/><text x="707.96" y="223.41" font-size="10.1" letter-spacing="-0.5" fill="#8f95fa" text-anchor="middle">1290</text><path d="M732.79 258.0 V238.67 Q732.79 236.67 734.79 236.67 H756.39 Q758.39 236.67 758.39 238.67 V258.0 Z" fill="#8f95fa"/><text x="745.59" y="230.27" font-size="10.1" letter-spacing="-0.5" fill="#8f95fa" text-anchor="middle">976</text><path d="M501.5 170.60 V258.0" stroke="#6e7280" stroke-width="1"/><path d="M497.0 258.0 H764.4" stroke="#999" stroke-width="1"/><path d="M497.0 258.00 H501.0" stroke="#777" stroke-width="1"/><text x="492.8" y="260.60" font-size="10.1" letter-spacing="-0.45" fill="#8c8c8c" text-anchor="end">0</text><path d="M497.0 236.15 H501.0" stroke="#777" stroke-width="1"/><text x="492.8" y="238.75" font-size="10.1" letter-spacing="-0.45" fill="#8c8c8c" text-anchor="end">1,000</text><path d="M497.0 214.30 H501.0" stroke="#777" stroke-width="1"/><text x="492.8" y="216.90" font-size="10.1" letter-spacing="-0.45" fill="#8c8c8c" text-anchor="end">2,000</text><path d="M497.0 192.45 H501.0" stroke="#777" stroke-width="1"/><text x="492.8" y="195.05" font-size="10.1" letter-spacing="-0.45" fill="#8c8c8c" text-anchor="end">3,000</text><path d="M497.0 170.60 H501.0" stroke="#777" stroke-width="1"/><text x="492.8" y="173.20" font-size="10.1" letter-spacing="-0.45" fill="#8c8c8c" text-anchor="end">4,000</text><path d="M519.81 258.0 V261.0" stroke="#999" stroke-width="1"/><text x="519.81" y="272.40" font-size="9.9" letter-spacing="-0.4" fill="#8c8c8c" text-anchor="middle">1500元</text><path d="M595.07 258.0 V261.0" stroke="#999" stroke-width="1"/><text x="595.07" y="272.40" font-size="9.9" letter-spacing="-0.4" fill="#8c8c8c" text-anchor="middle">1700元</text><path d="M670.33 258.0 V261.0" stroke="#999" stroke-width="1"/><text x="670.33" y="272.40" font-size="9.9" letter-spacing="-0.4" fill="#8c8c8c" text-anchor="middle">3700元</text><path d="M745.59 258.0 V261.0" stroke="#999" stroke-width="1"/><text x="745.59" y="272.40" font-size="9.9" letter-spacing="-0.4" fill="#8c8c8c" text-anchor="middle">4400元</text><text x="500.5" y="157.8" font-size="8.8" fill="#999">销量</text><text x="632.3" y="287.2" font-size="8.8" fill="#999" text-anchor="middle">单价</text><circle cx="606.4" cy="304.2" r="3.6" fill="#8f95fa"/><text x="613.8" y="307.5" font-size="9.2" fill="#666">销量</text></svg>
<div class="panel" style="left:656px;top:275px;width:285px;height:230px;border-radius:19px"></div>
<div class="card" style="left:670px;top:288.6px;width:256.7px;height:202.4px;border-radius:12px"></div>
<span class="t " style="left:680px;top:293.00px;font-size:9.4px;color:#333;font-weight:500;-webkit-text-stroke:0.15px #333;">不同类型产品销量趋势</span>
<div class="hl" style="left:670px;top:318px;width:256.7px"></div>
<svg style="left:894.2px;top:331.2px" width="14" height="12" viewBox="0 0 14 12" fill="none" stroke="#666" stroke-width="0.9" stroke-linecap="round" stroke-linejoin="round"><path d="M5 8.6 H3.6 A2.6 2.6 0 0 1 3.4 3.5 A3.7 3.7 0 0 1 10.6 3.4 A2.6 2.6 0 0 1 10.4 8.6 H9"/><path d="M7 5.2 V10"/><path d="M5.9 9.4 L7 10.5 L8.1 9.4" fill="#666"/></svg>
<svg style="left:0;top:0" width="1000" height="681" viewBox="0 0 1000 681"><path d="M799.6 400.8 L799.60 348.90 A51.9 51.9 0 0 1 828.02 357.37 Z" fill="#3b5bdf" stroke="#fff" stroke-width="0.8" stroke-linejoin="round"/><path d="M799.6 400.8 L828.02 357.37 A51.9 51.9 0 0 1 850.90 392.95 Z" fill="#3d97ef" stroke="#fff" stroke-width="0.8" stroke-linejoin="round"/><path d="M799.6 400.8 L850.90 392.95 A51.9 51.9 0 0 1 779.99 448.85 Z" fill="#3db0f0" stroke="#fff" stroke-width="0.8" stroke-linejoin="round"/><path d="M799.6 400.8 L779.99 448.85 A51.9 51.9 0 0 1 747.84 397.00 Z" fill="#3dd0f0" stroke="#fff" stroke-width="0.8" stroke-linejoin="round"/><path d="M799.6 400.8 L747.84 397.00 A51.9 51.9 0 0 1 799.60 348.90 Z" fill="#3de3c8" stroke="#fff" stroke-width="0.8" stroke-linejoin="round"/><path d="M814.51 350.78 L816.20 345.12" stroke="#8a3a4a" stroke-width="1.35"/><text x="816" y="341.9" font-size="8" fill="#555" font-weight="500" text-anchor="middle">一月</text><path d="M843.50 372.56 L848.46 369.37" stroke="#6e7a3a" stroke-width="1.35"/><text x="858.2" y="370.5" font-size="8" fill="#555" font-weight="500" text-anchor="middle">二月</text><path d="M831.92 441.79 L835.57 446.43" stroke="#a08050" stroke-width="1.35"/><text x="836.8" y="455.5" font-size="8" fill="#555" font-weight="500" text-anchor="middle">四月</text><path d="M755.24 428.31 L750.22 431.42" stroke="#3a4a7a" stroke-width="1.35"/><text x="739" y="435.9" font-size="8" fill="#555" font-weight="500" text-anchor="middle">五月</text><path d="M764.07 362.56 L760.05 358.24" stroke="#6a3a6a" stroke-width="1.35"/><text x="758" y="355.5" font-size="8" fill="#555" font-weight="500" text-anchor="middle">六月</text><rect x="699.20" y="469" width="9.2" height="9.2" fill="#3b5bdf"/><text x="714.60" y="476.5" font-size="7.8" fill="#333" font-weight="700">一月</text><rect x="741.20" y="469" width="9.2" height="9.2" fill="#3d97ef"/><text x="756.60" y="476.5" font-size="7.8" fill="#333" font-weight="700">二月</text><rect x="783.20" y="469" width="9.2" height="9.2" fill="#3db0f0"/><text x="798.60" y="476.5" font-size="7.8" fill="#333" font-weight="700">四月</text><rect x="825.20" y="469" width="9.2" height="9.2" fill="#3dd0f0"/><text x="840.60" y="476.5" font-size="7.8" fill="#333" font-weight="700">五月</text><rect x="867.20" y="469" width="9.2" height="9.2" fill="#3de3c8"/><text x="882.60" y="476.5" font-size="7.8" fill="#333" font-weight="700">六月</text></svg>
<div class="panel" style="left:58px;top:400px;width:445px;height:221px;border-radius:19px;background:#fafafb"></div>
<div class="card" style="left:72.7px;top:414px;width:416.3px;height:192px;border-radius:12px"></div>
<span class="t " style="left:83px;top:420.00px;font-size:8.95px;color:#383838;font-weight:500;-webkit-text-stroke:0.15px #383838;">不同类型产品销售额趋势</span>
<div class="hl" style="left:72.7px;top:444px;width:416.3px"></div>
<span class="t " style="left:367.5px;top:419.00px;font-size:9.2px;color:#4b7df5;font-weight:400;">保存配置</span>
<svg style="left:0;top:0" width="1000" height="681" fill="none" stroke="#555" stroke-width="0.9" stroke-linejoin="round"><path d="M425.58 431.20 L421.60 433.50 L417.62 431.20 L417.62 426.60 L421.60 424.30 L425.58 426.60 Z"/><circle cx="421.6" cy="428.9" r="1.75"/></svg>
<div class="vl" style="left:437px;top:424px;height:10px;background:#ebecee"></div>
<svg style="left:447.6px;top:423.8px" width="11" height="11" viewBox="0 0 11 11" fill="none" stroke="#555" stroke-width="0.85">
<rect x="0.6" y="0.6" width="6.4" height="6.4" rx="1.4"/><path d="M2 3.4 L3.4 2 M2 5 L5 2" stroke-width="0.7"/><circle cx="7.3" cy="7.3" r="2.9" fill="#fff"/></svg>
<svg style="left:469.8px;top:424.5px" width="9" height="9" viewBox="0 0 9 9" fill="none" stroke="#333" stroke-width="0.95" stroke-linecap="round"><path d="M0.5 0.5 L8.5 8.5 M8.5 0.5 L0.5 8.5"/></svg>
<svg style="left:456.8px;top:455.9px" width="14" height="12" viewBox="0 0 14 12" fill="none" stroke="#666" stroke-width="0.9" stroke-linecap="round" stroke-linejoin="round"><path d="M5 8.6 H3.6 A2.6 2.6 0 0 1 3.4 3.5 A3.7 3.7 0 0 1 10.6 3.4 A2.6 2.6 0 0 1 10.4 8.6 H9"/><path d="M7 5.2 V10"/><path d="M5.9 9.4 L7 10.5 L8.1 9.4" fill="#666"/></svg>
<svg style="left:0;top:0" width="1000" height="681" viewBox="0 0 1000 681"><path d="M109.8 523.33 H477.4" stroke="#dcdcdc" stroke-width="0.9" stroke-dasharray="2 2"/><path d="M109.8 498.67 H477.4" stroke="#dcdcdc" stroke-width="0.9" stroke-dasharray="2 2"/><path d="M109.8 474.00 H477.4" stroke="#dcdcdc" stroke-width="0.9" stroke-dasharray="2 2"/><path d="M109.80 474.00 V548.0" stroke="#dcdcdc" stroke-width="0.9" stroke-dasharray="2 2"/><path d="M183.32 474.00 V548.0" stroke="#dcdcdc" stroke-width="0.9" stroke-dasharray="2 2"/><path d="M256.84 474.00 V548.0" stroke="#dcdcdc" stroke-width="0.9" stroke-dasharray="2 2"/><path d="M330.36 474.00 V548.0" stroke="#dcdcdc" stroke-width="0.9" stroke-dasharray="2 2"/><path d="M403.88 474.00 V548.0" stroke="#dcdcdc" stroke-width="0.9" stroke-dasharray="2 2"/><path d="M477.40 474.00 V548.0" stroke="#dcdcdc" stroke-width="0.9" stroke-dasharray="2 2"/><path d="M104.8 548.0 H477.4" stroke="#ccc" stroke-width="1"/><text x="101.8" y="551.00" font-size="8.4" fill="#666" text-anchor="end">0</text><text x="101.8" y="526.33" font-size="8.4" fill="#666" text-anchor="end">200</text><text x="101.8" y="501.67" font-size="8.4" fill="#666" text-anchor="end">400</text><text x="101.8" y="477.00" font-size="8.4" fill="#666" text-anchor="end">600</text><path d="M146.56 539.98 L220.08 536.04 L293.60 520.99 L367.12 533.69 L440.64 534.80" fill="none" stroke="#b2e69b" stroke-width="1.35" stroke-linejoin="round"/><circle cx="146.56" cy="539.98" r="1.65" fill="#63cf3e"/><circle cx="220.08" cy="536.04" r="1.65" fill="#63cf3e"/><circle cx="293.60" cy="520.99" r="1.65" fill="#63cf3e"/><circle cx="367.12" cy="533.69" r="1.65" fill="#63cf3e"/><circle cx="440.64" cy="534.80" r="1.65" fill="#63cf3e"/><path d="M146.56 535.05 L220.08 528.02 L293.60 499.41 L367.12 519.63 L440.64 514.33" fill="none" stroke="#ff9fb9" stroke-width="1.35" stroke-linejoin="round"/><circle cx="146.56" cy="535.05" r="1.65" fill="#f6588d"/><circle cx="220.08" cy="528.02" r="1.65" fill="#f6588d"/><circle cx="293.60" cy="499.41" r="1.65" fill="#f6588d"/><circle cx="367.12" cy="519.63" r="1.65" fill="#f6588d"/><circle cx="440.64" cy="514.33" r="1.65" fill="#f6588d"/><path d="M146.56 530.36 L220.08 517.04 L293.60 484.73 L367.12 514.33 L440.64 510.01" fill="none" stroke="#7986cb" stroke-width="1.35" stroke-linejoin="round"/><circle cx="146.56" cy="530.36" r="1.65" fill="#27359c"/><circle cx="220.08" cy="517.04" r="1.65" fill="#27359c"/><circle cx="293.60" cy="484.73" r="1.65" fill="#27359c"/><circle cx="367.12" cy="514.33" r="1.65" fill="#27359c"/><circle cx="440.64" cy="510.01" r="1.65" fill="#27359c"/><text transform="translate(149.26,562.4) rotate(-90)" font-size="7.6" fill="#666" text-anchor="middle">一月</text><text transform="translate(222.78,562.4) rotate(-90)" font-size="7.6" fill="#666" text-anchor="middle">二月</text><text transform="translate(296.30,562.4) rotate(-90)" font-size="7.6" fill="#666" text-anchor="middle">四月</text><text transform="translate(369.82,562.4) rotate(-90)" font-size="7.6" fill="#666" text-anchor="middle">五月</text><text transform="translate(443.34,562.4) rotate(-90)" font-size="7.6" fill="#666" text-anchor="middle">六月</text><circle cx="167.7" cy="589" r="4.4" fill="#fb6f9b"/><text x="177.4" y="591.9" font-size="8" fill="#333" font-weight="500">电视 <tspan font-size="12" font-weight="700" dy="1.4">·</tspan><tspan dy="-1.4"> 订单金额</tspan></text><circle cx="247.4" cy="589" r="4.4" fill="#4257b2"/><text x="256.7" y="591.9" font-size="8" fill="#333" font-weight="500">冰箱 <tspan font-size="12" font-weight="700" dy="1.4">·</tspan><tspan dy="-1.4"> 订单金额</tspan></text><circle cx="326" cy="589" r="4.4" fill="#8fd96a"/><text x="337.4" y="591.9" font-size="8" fill="#333" font-weight="500">热水器 <tspan font-size="12" font-weight="700" dy="1.4">·</tspan><tspan dy="-1.4"> 订单金额</tspan></text></svg>
</div>
</body>
</html>
